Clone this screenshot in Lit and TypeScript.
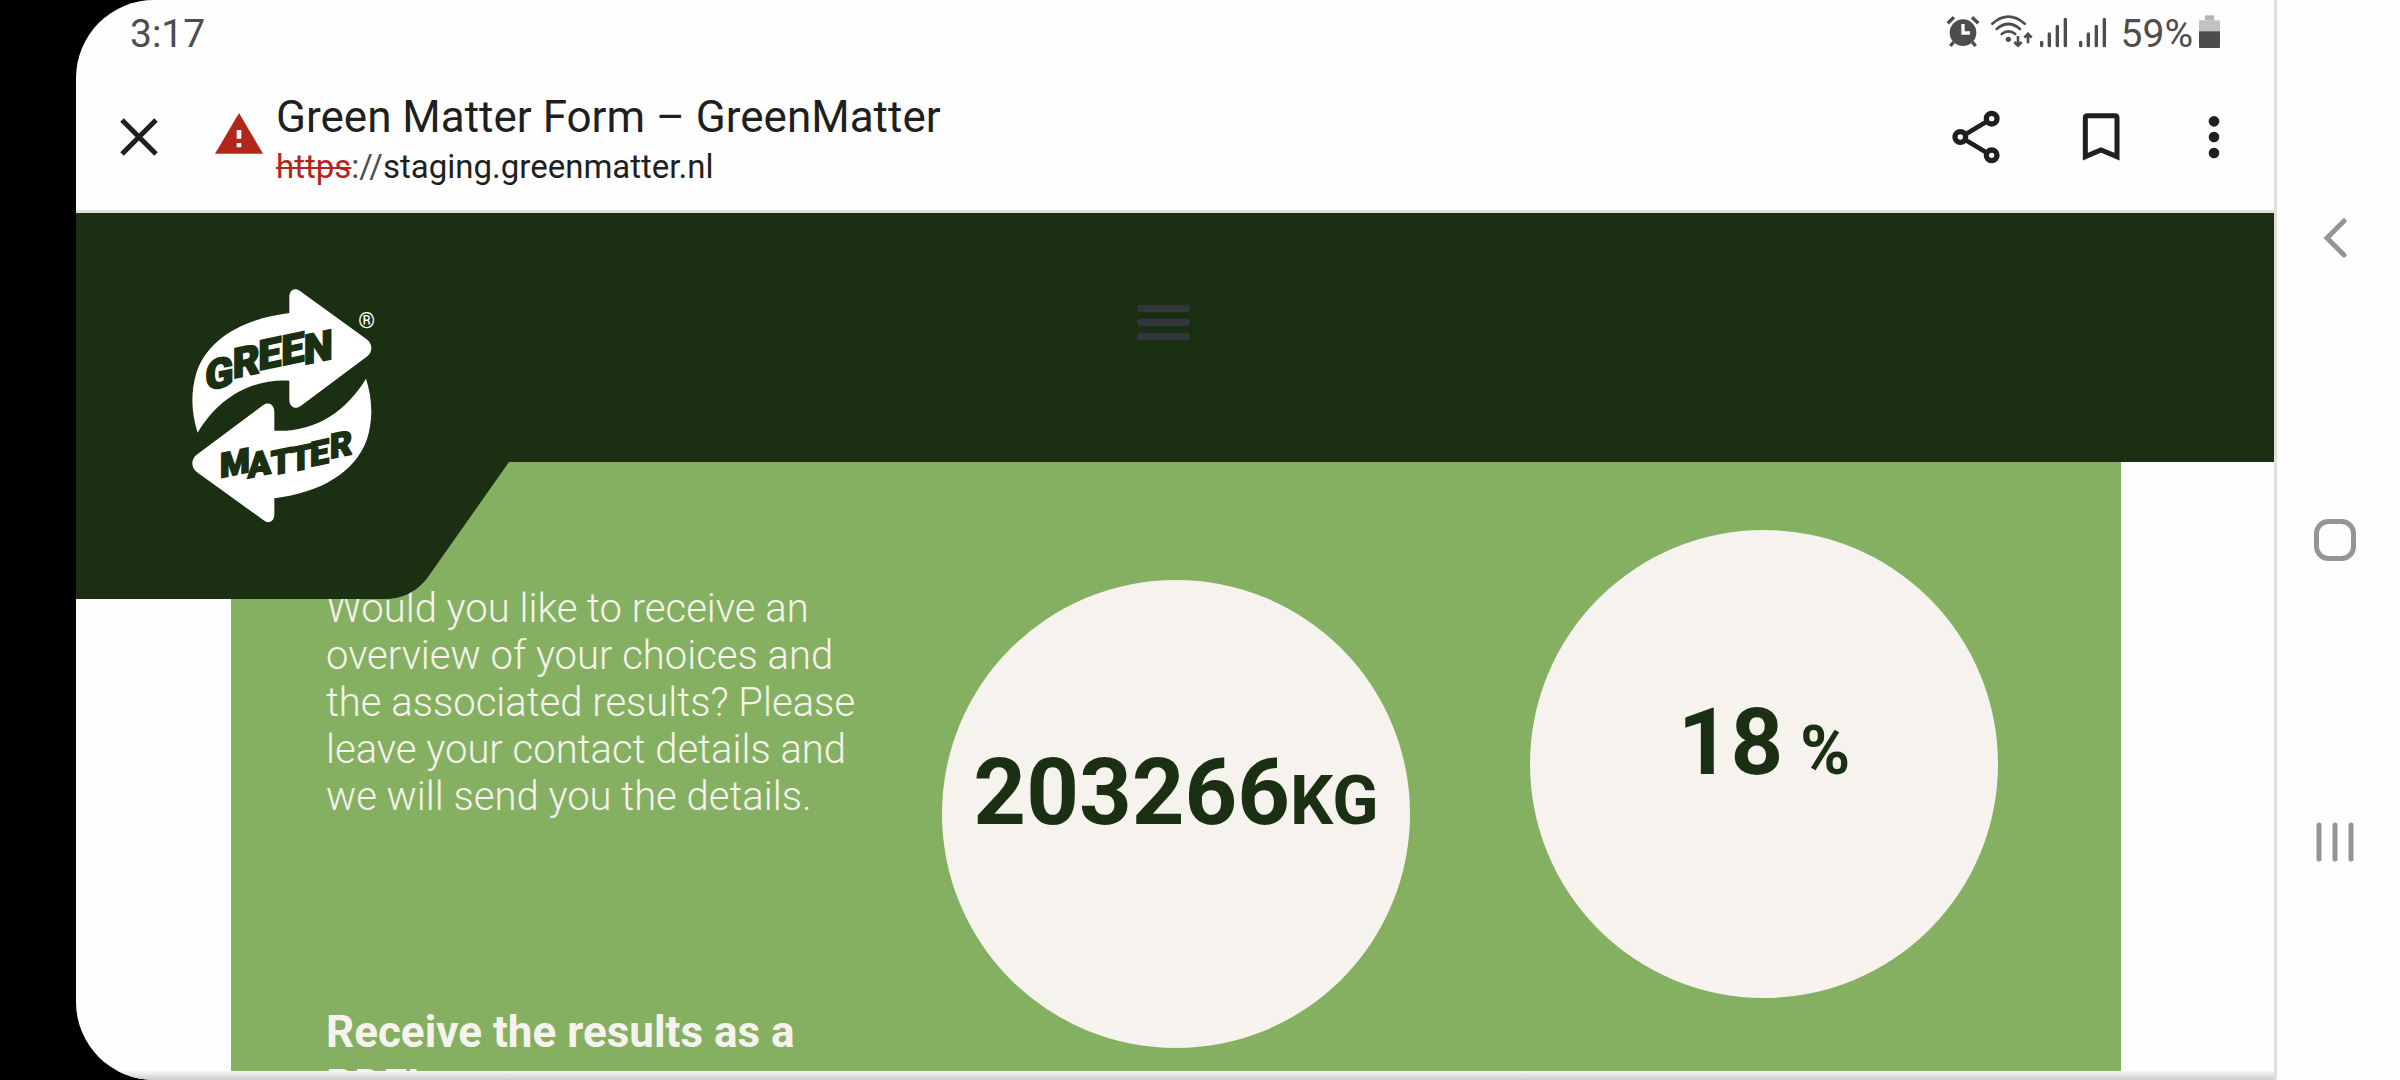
import { LitElement, html, css } from "lit";
import { customElement } from "lit/decorators.js";

/** Clock, connectivity and battery strip at the top of the phone. */
@customElement("status-bar")
class StatusBar extends LitElement {
  static styles = css`
    :host {
      display: flex;
      align-items: center;
      justify-content: space-between;
      height: 63px;
      padding: 0 54px;
      color: #4d4d4d;
      font-size: 39px;
      line-height: 46px;
    }
    span {
      padding-top: 4px;
    }
    .icons {
      display: flex;
      align-items: center;
    }
    svg {
      display: block;
      flex: none;
    }
    .wifi {
      margin-left: 11px;
    }
    .signal {
      margin-left: 7px;
    }
    .signal + .signal {
      margin-left: 12px;
    }
    .level {
      margin-left: 15px;
    }
    .battery {
      margin-left: 6px;
    }
  `;

  private signal() {
    return html`<svg class="signal" width="27" height="34" viewBox="423 45 81 102" aria-label="Signal">
      <g fill="none" stroke="#4d4d4d" stroke-width="10" stroke-linecap="round">
        <path d="M428 127V137M451 102V137M475 79V137M499 58V137" />
      </g>
    </svg>`;
  }

  render() {
    return html`
      <span>3:17</span>
      <div class="icons">
        <svg width="34" height="34" viewBox="135 45 102 102" aria-label="Alarm">
          <circle cx="186" cy="98" r="40" fill="#4d4d4d" />
          <path d="M140 70L159 52M232 70L213 52" stroke="#4d4d4d" stroke-width="10" fill="none" />
          <path d="M158 126L148 138M214 126L224 138" stroke="#4d4d4d" stroke-width="10" fill="none" />
          <path d="M186 72V99H207" stroke="#fff" stroke-width="10" fill="none" />
        </svg>
        <svg class="wifi" width="42" height="34" viewBox="273 45 126 102" aria-label="Wi-Fi">
          <g fill="none" stroke="#4d4d4d" stroke-width="8" stroke-linecap="round">
            <path d="M277 71Q325 29 374 71" />
            <path d="M290 87Q325 57 360 87" />
            <path d="M305 102Q325 86 346 102" />
          </g>
          <circle cx="325" cy="118" r="8" fill="#4d4d4d" />
          <path
            d="M354 108V136M343 126L354 137L365 126M384 130V102M373 113L384 102L395 113"
            fill="none"
            stroke="#4d4d4d"
            stroke-width="8"
          />
        </svg>
        ${this.signal()} ${this.signal()}
        <span class="level">59%</span>
        <svg class="battery" width="21" height="34" viewBox="897 44 63 102" aria-label="Battery">
          <path d="M915 45H942V60H915Z" fill="#b4b4b4" />
          <path d="M900 60H957Q960 60 960 63V93H897V63Q897 60 900 60Z" fill="#c2c2c2" />
          <path d="M897 93H960V140Q960 143 957 143H900Q897 143 897 140Z" fill="#4d4d4d" />
        </svg>
      </div>
    `;
  }
}

/** Custom-tab toolbar: close, page security, title, URL and actions. */
@customElement("browser-toolbar")
class BrowserToolbar extends LitElement {
  static styles = css`
    :host {
      display: flex;
      align-items: center;
      height: 147px;
      padding: 0 30px 0 33px;
      border-bottom: 3px solid #dee1dc;
      color: #1f1f1f;
    }
    button {
      display: grid;
      place-items: center;
      width: 60px;
      height: 72px;
      padding: 0;
      border: 0;
      background: none;
    }
    svg {
      display: block;
    }
    .warning {
      margin: 0 0 6px 46px;
      flex: none;
    }
    .page {
      flex: 1;
      min-width: 0;
      padding: 6px 0 0 13px;
    }
    .title {
      margin: 0 0 2px;
      font-size: 44px;
      font-weight: 400;
      line-height: 52px;
      white-space: nowrap;
    }
    .url {
      font-size: 33px;
      line-height: 44px;
      white-space: nowrap;
    }
    .bad {
      color: #b3261e;
      text-decoration: line-through 2px;
    }
    .sep {
      color: #4d4d4d;
    }
    .actions {
      display: flex;
      gap: 53px;
    }
    .share {
      margin-right: 12px;
    }
  `;

  render() {
    return html`
      <button aria-label="Close">
        <svg width="38" height="38" viewBox="0 0 38 38">
          <path d="M2 2L36 36M36 2L2 36" stroke="#1f1f1f" stroke-width="5" fill="none" />
        </svg>
      </button>
      <svg class="warning" width="48" height="42" viewBox="465 340 144 126" aria-label="Not secure">
        <path d="M537 340L609 462H465Z" fill="#b3261e" />
        <path d="M530 391H544V417H530ZM530 430H544V443H530Z" fill="#fff" />
      </svg>
      <div class="page">
        <h1 class="title">Green Matter Form – GreenMatter</h1>
        <div class="url"><span class="bad">https</span><span class="sep">://</span>staging.greenmatter.nl</div>
      </div>
      <div class="actions">
        <button class="share" aria-label="Share">
          <svg width="48" height="54" viewBox="158 328 144 162">
            <g fill="none" stroke="#1f1f1f" stroke-width="14">
              <path d="M260 364L200 400M200 419L260 455" />
              <g stroke-width="16">
                <circle cx="277" cy="354" r="16" />
                <circle cx="183" cy="409" r="16" />
                <circle cx="277" cy="464" r="16" />
              </g>
            </g>
          </svg>
        </button>
        <button aria-label="Bookmark">
          <svg width="38" height="48" viewBox="547 338 114 144">
            <path
              d="M557 469V352Q557 346 563 346H646Q652 346 652 352V469L604 449Z"
              fill="none"
              stroke="#1f1f1f"
              stroke-width="15"
            />
          </svg>
        </button>
        <button aria-label="More">
          <svg width="12" height="44" viewBox="926 343 36 132">
            <g fill="#1f1f1f">
              <circle cx="944" cy="362" r="16" />
              <circle cx="944" cy="409" r="16" />
              <circle cx="944" cy="457" r="16" />
            </g>
          </svg>
        </button>
      </div>
    `;
  }
}

/** Brand mark: two arrows circling round the name. */
@customElement("brand-logo")
class BrandLogo extends LitElement {
  static styles = css`
    :host {
      display: block;
    }
    svg {
      display: block;
    }
    .word {
      font-family: Roboto, sans-serif;
      font-weight: 900;
      fill: #1b3012;
      stroke: #1b3012;
      stroke-width: 5px;
    }
    .green {
      font-size: 124px;
    }
    .matter {
      font-size: 102px;
    }
    .mark {
      font-family: Roboto, sans-serif;
      font-size: 64px;
      fill: #fff;
    }
  `;

  render() {
    return html`
      <svg width="184" height="234" viewBox="96 56 552 702" aria-label="Green Matter">
        <defs>
          <path
            id="arrow"
            d="M388 128V80C388 58 405 50 420 62L622 208C638 222 638 244 622 258L422 407C405 420 388 408 388 388V331C270 325 175 385 113 487C95 430 90 370 110 305C145 205 250 145 388 128Z"
          />
        </defs>
        <use href="#arrow" fill="#fff" />
        <use href="#arrow" fill="#fff" transform="rotate(180 365.5 406)" />
        <text class="word green" transform="skewY(-12)" x="136 218 295 364 431" y="390 371 363 364 375">GREEN</text>
        <text class="word matter" transform="skewY(-12)" x="180 263 332 391 450 510" y="661 680 687 689 685 674">MATTER</text>
        <text class="mark" x="620" y="173" text-anchor="middle">®</text>
      </svg>
    `;
  }
}

/** Site header with the logo tab that hangs over the content. */
@customElement("site-header")
class SiteHeader extends LitElement {
  static styles = css`
    :host {
      display: grid;
      grid-template-columns: 1fr 84px 1fr;
      align-items: start;
      position: relative;
      z-index: 1;
      height: 249px;
      padding: 0 24px 0 0;
      box-sizing: border-box;
      background: #1b3012;
    }
    .tab {
      position: absolute;
      left: 0;
      top: 100%;
      display: block;
    }
    .logo {
      position: relative;
      z-index: 1;
      justify-self: start;
      margin: 76px 0 0 116px;
    }
    .menu {
      display: grid;
      place-content: center;
      gap: 7px;
      height: 84px;
      margin-top: 67px;
      padding: 0;
      border: 0;
      border-radius: 8px;
      background: #1a2e11;
    }
    .bar {
      width: 53px;
      height: 7px;
      border-radius: 4px;
      background: #33373d;
    }
  `;

  render() {
    return html`
      <svg class="tab" width="434" height="137" viewBox="0 0 434 137" aria-hidden="true">
        <path d="M0 0H433L352 115Q336 137 308 137H0Z" fill="#1b3012" />
      </svg>
      <a class="logo" href="#" aria-label="Green Matter"><brand-logo></brand-logo></a>
      <button class="menu" aria-label="Menu">
        <span class="bar"></span><span class="bar"></span><span class="bar"></span>
      </button>
    `;
  }
}

/** Results panel: copy beside the two figures. */
@customElement("results-panel")
class ResultsPanel extends LitElement {
  static styles = css`
    :host {
      display: grid;
      grid-template-columns: repeat(3, minmax(0, 1fr));
      align-items: start;
      padding: 0 63px;
      background: #86b061;
      color: #f6f3ee;
    }
    .copy {
      padding: 123px 16px 0 32px;
    }
    .intro {
      margin: 0 0 185px;
      font-size: 40px;
      font-weight: 300;
      line-height: 47px;
    }
    .heading {
      margin: 0;
      font-size: 44px;
      font-weight: 700;
      line-height: 54px;
    }
    .circle {
      display: flex;
      align-items: center;
      justify-content: center;
      justify-self: center;
      width: 468px;
      height: 468px;
      padding-bottom: 34px;
      box-sizing: border-box;
      border-radius: 50%;
      background: #f6f3ee;
      color: #1b3012;
      font-size: 92px;
      font-weight: 700;
      line-height: 108px;
      white-space: nowrap;
    }
    .weight {
      margin-top: 118px;
    }
    .share {
      margin-top: 68px;
    }
    .unit {
      font-size: 68px;
      white-space: pre;
    }
  `;

  render() {
    return html`
      <div class="copy">
        <p class="intro">
          Would you like to receive an overview of your choices and the associated results? Please leave your contact
          details and we will send you the details.
        </p>
        <h2 class="heading">Receive the results as a PDF!</h2>
      </div>
      <div class="circle weight"><span>203266<span class="unit">KG</span></span></div>
      <div class="circle share"><span>18<span class="unit"> %</span></span></div>
    `;
  }
}

/** System navigation down the right-hand edge. */
@customElement("system-nav")
class SystemNav extends LitElement {
  static styles = css`
    :host {
      display: grid;
      grid-template-rows: repeat(3, 1fr);
      width: 126px;
      padding: 87px 7px 87px 0;
      box-sizing: border-box;
      border-left: 3px solid #dfdfdf;
      background: #fefefe;
    }
    button {
      display: grid;
      place-items: center;
      padding: 0;
      border: 0;
      background: none;
    }
    svg {
      display: block;
    }
    g {
      fill: none;
      stroke: #959595;
      stroke-width: 5;
      stroke-linecap: round;
    }
  `;

  render() {
    return html`
      <button aria-label="Back">
        <svg width="24" height="42" viewBox="0 0 24 42"><g><path d="M21 4L4 21L21 38" /></g></svg>
      </button>
      <button aria-label="Home">
        <svg width="42" height="42" viewBox="0 0 42 42">
          <g><rect x="2.5" y="2.5" width="37" height="37" rx="12" /></g>
        </svg>
      </button>
      <button aria-label="Recents">
        <svg width="38" height="40" viewBox="0 0 38 40">
          <g><path d="M3 3V37M19 3V37M35 3V37" /></g>
        </svg>
      </button>
    `;
  }
}

@customElement("app-root")
class AppRoot extends LitElement {
  static styles = css`
    :host {
      display: block;
      height: 100vh;
      padding-left: 76px;
      box-sizing: border-box;
      background: #000;
      font-family: Roboto, sans-serif;
    }
    .device {
      display: flex;
      height: 100%;
      overflow: hidden;
      border-radius: 78px 0 0 78px;
      background: #fefefe;
    }
    .screen {
      flex: 1;
      min-width: 0;
      display: flex;
      flex-direction: column;
    }
    .page {
      flex: 1;
      min-height: 0;
      display: flex;
      flex-direction: column;
      overflow: hidden;
    }
    .content {
      flex: 1;
      min-height: 0;
      display: grid;
      padding: 0 153px 0 155px;
    }
    .shade {
      height: 9px;
      background: linear-gradient(#f8f8f8, #cccccc);
    }
    system-nav {
      flex: none;
    }
  `;

  render() {
    return html`
      <div class="device">
        <div class="screen">
          <status-bar></status-bar>
          <browser-toolbar></browser-toolbar>
          <main class="page">
            <site-header></site-header>
            <div class="content"><results-panel></results-panel></div>
          </main>
          <div class="shade"></div>
        </div>
        <system-nav></system-nav>
      </div>
    `;
  }
}
